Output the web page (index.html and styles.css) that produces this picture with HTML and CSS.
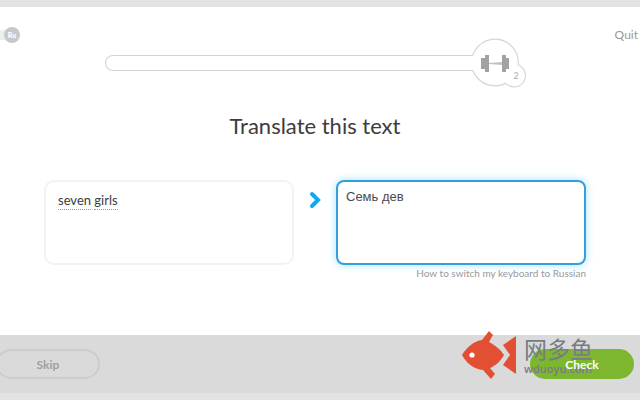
FILE: index.html
```html
<!DOCTYPE html>
<html lang="en">
<head>
    <meta charset="UTF-8">
    <meta name="viewport" content="width=device-width, initial-scale=1.0">
    <title>Translate this text</title>
    <link rel="stylesheet" href="styles.css">
</head>
<body>
    <header class="top">
        <div class="language"><span class="badge">Ru</span></div>
        <a class="quit" href="#">Quit</a>
    </header>

    <main class="lesson">
        <div class="progress">
            <div class="bar" role="progressbar" aria-label="Progress" aria-valuenow="0"></div>
            <svg class="strength" width="57" height="50" viewBox="0 0 57 50">
                <g fill="#fff" stroke="#d6d6d6" stroke-width="3">
                    <circle cx="25" cy="24.500" r="22.500"/>
                    <circle cx="44" cy="37.500" r="10.500"/>
                </g>
                <circle cx="25" cy="24.500" r="22.800" fill="#fff"/>
                <circle cx="44" cy="37.500" r="10.800" fill="#fff"/>
                <path d="M0 18h8v14H0z" fill="#fff"/>
                <g fill="#a2a2a2">
                    <path d="M11 20h4v-3h4v17h-4v-3h-4zM39 20h-3v-3h-4v17h4v-3h3z"/>
                    <path d="M19 25l13-1v3l-13-1z" fill="#c2c2c2"/>
                </g>
                <text x="46" y="41" text-anchor="middle">2</text>
            </svg>
        </div>

        <h1>Translate this text</h1>

        <div class="exercise">
            <div class="card">
                <span class="word">seven</span> <span class="word">girls</span>
            </div>
            <svg class="arrow" width="12" height="18" viewBox="0 0 12 18">
                <path d="M3 3l6 6-6 6" fill="none" stroke="#0fa9ef" stroke-width="4" stroke-linecap="round"/>
            </svg>
            <textarea class="answer" aria-label="Your translation" spellcheck="false">Семь дев</textarea>
        </div>
        <a class="hint" href="#">How to switch my keyboard to Russian</a>
    </main>

    <footer class="actions">
        <button class="skip" type="button">Skip</button>
        <button class="check" type="button"><span>Check</span></button>

        <div class="watermark">
            <svg width="56" height="50" viewBox="0 0 56 50">
                <path fill="#e34f33" d="M1 25C6 17 13 11 21 10L28 1l4 4-4 7c6 3 11 7 15 13-4 7-9 11-14 13l5 6-4 5-8-9C13 39 6 34 1 25zM55 6v38L42 35l7-10-7-10z"/>
                <circle cx="11" cy="25" r="2.600" fill="#fff"/>
            </svg>
            <div class="watermark-text">
                <span class="name" lang="zh">网多鱼</span>
                <span class="site">wduoyu.com</span>
            </div>
        </div>
    </footer>
</body>
</html>
```

FILE: styles.css
```css
* {
    box-sizing: border-box;
}

body {
    display: flex;
    flex-direction: column;
    min-height: 100vh;
    margin: 0;
    border-top: 7px solid #e3e3e3;
    border-bottom: 7px solid #e3e3e3;
    background-color: #fff;
    color: #3c3c3c;
    font-family: Lato, "Noto Sans", sans-serif;
    overflow-x: hidden;
}

a {
    color: #999;
    text-decoration: none;
}

.top {
    display: flex;
    justify-content: space-between;
    align-items: center;
    height: 31px;
    padding: 24px 2px 0 0;
}

.language {
    width: 20px;
    height: 10px;
    display: flex;
    align-items: center;
    justify-content: flex-end;
    background: linear-gradient(to right, #eee 50%, #fff 50%);
}

.badge {
    width: 16px;
    height: 16px;
    border-radius: 50%;
    background-color: #c8c8c8;
    color: #fff;
    font-size: 7px;
    font-weight: 900;
    line-height: 16px;
    text-align: center;
}

.quit {
    font-size: 12px;
    line-height: 16px;
}

.lesson {
    flex: 1;
    display: flex;
    flex-direction: column;
    padding: 0 54px 0 44px;
}

.progress {
    display: flex;
    align-items: center;
    margin: 0 59px 0 61px;
}

.bar {
    flex: 1;
    height: 16px;
    border: 1px solid #d4d4d4;
    border-right: none;
    border-radius: 8px 0 0 8px;
}

.strength {
    margin-left: -4px;
}

.strength text {
    fill: #aaa;
    font-size: 9px;
}

h1 {
    margin: 23px 0 39px;
    font-size: 22px;
    font-weight: 400;
    line-height: 30px;
    text-align: center;
}

.exercise {
    display: grid;
    grid-template-columns: 1fr 12px 1fr;
    gap: 15px;
}

.card {
    height: 85px;
    padding: 10px 12px;
    border: 2px solid #f3f3f3;
    border-radius: 10px;
    font-size: 13px;
    line-height: 17px;
}

.word {
    display: inline-block;
    border-bottom: 1px dotted #999;
}

.arrow {
    margin-top: 11px;
}

.answer {
    display: block;
    width: 100%;
    height: 85px;
    padding: 7px 8px;
    border: 2px solid #359fdb;
    border-radius: 8px;
    outline: none;
    box-shadow: 0 0 8px #a5e4ff;
    color: #4b4b4b;
    font-family: "Liberation Sans", Arial, sans-serif;
    font-size: 13px;
    line-height: 16px;
    resize: none;
}

.hint {
    align-self: flex-end;
    margin-top: 1px;
    font-size: 10px;
    line-height: 14px;
}

.actions {
    position: relative;
    display: flex;
    justify-content: space-between;
    align-items: center;
    height: 58px;
    padding-right: 6px;
    background-color: #dadada;
}

button {
    width: 104px;
    height: 30px;
    border: none;
    border-radius: 15px;
    font-family: inherit;
    font-size: 12px;
    font-weight: 700;
    cursor: pointer;
}

.skip {
    margin-left: -4px;
    border: 2px solid #cdcdcd;
    background-color: transparent;
    color: #a0a0a0;
}

.check {
    background-color: #7db72f;
    color: #fff;
}

/* keeps the label above the watermark */
.check span {
    position: relative;
    z-index: 2;
}

.watermark {
    position: absolute;
    top: -5px;
    right: 47px;
    display: flex;
    gap: 7px;
    color: #777b82;
    pointer-events: none;
}

.watermark-text {
    display: flex;
    flex-direction: column;
    padding-top: 5px;
}

.name {
    font-family: "Noto Sans CJK SC", sans-serif;
    font-size: 23px;
    font-weight: 400;
    line-height: 26px;
}

.site {
    font-family: "Open Sans", sans-serif;
    font-size: 11px;
    font-weight: 600;
    line-height: 15px;
}
```
